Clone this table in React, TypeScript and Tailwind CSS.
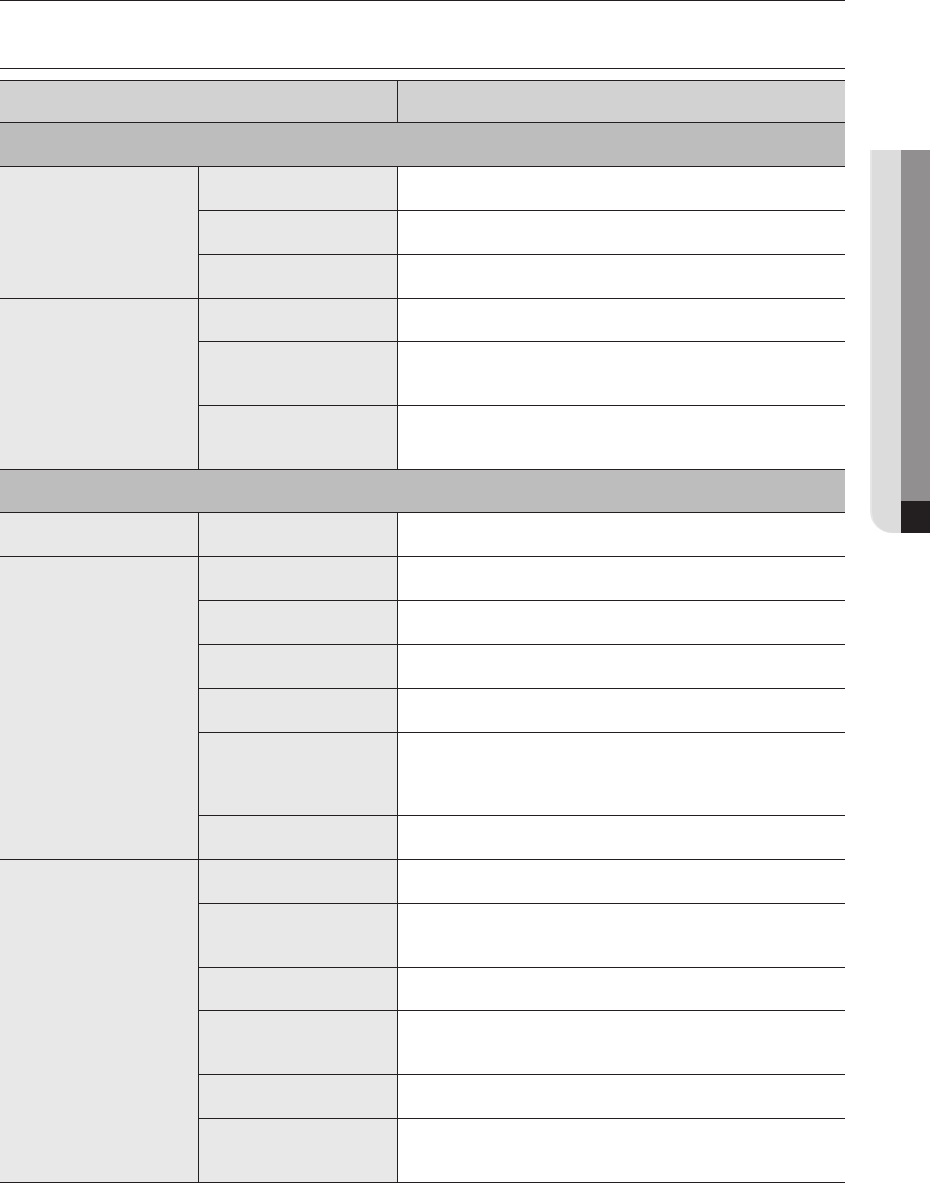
import React from "react";

type Group = { rows: number[] };

const LINE = "border-[#231f20]";

function GroupBlock({ rows }: Group) {
  return (
    <div className="flex">
      <div className={`w-[199px] shrink-0 border-t border-r ${LINE} bg-[#e8e8e8]`} />
      <div className="flex flex-1 flex-col">
        {rows.map((h, i) => (
          <div key={i} className={`flex border-t ${LINE}`} style={{ height: h }}>
            <div className={`w-[199px] shrink-0 border-r ${LINE} bg-[#e8e8e8]`} />
            <div className="flex-1 bg-white" />
          </div>
        ))}
      </div>
    </div>
  );
}

function Section() {
  return <div className={`h-[44px] border-t ${LINE} bg-[#bdbdbd]`} />;
}

export default function App() {
  return (
    <div className="flex h-[1183px] w-[930px] overflow-hidden bg-white font-['Liberation_Sans',sans-serif]">
      <div className="flex w-[845px] shrink-0 flex-col">
        <div className={`h-[68px] border-t ${LINE}`} />
        <div className={`h-[12px] border-t ${LINE}`} />
        <div className={`flex h-[42px] border-t ${LINE} bg-[#d2d2d2]`}>
          <div className={`w-[398px] shrink-0 border-r ${LINE}`} />
          <div className="flex-1" />
        </div>
        <Section />
        <GroupBlock rows={[44, 44, 44]} />
        <GroupBlock rows={[43, 64, 64]} />
        <div className={`h-[43px] border-t ${LINE} bg-[#bdbdbd]`} />
        <GroupBlock rows={[44]} />
        <GroupBlock rows={[44, 44, 44, 44, 83, 44]} />
        <div className={`border-b ${LINE}`}>
          <GroupBlock rows={[44, 64, 43, 64, 44, 64]} />
        </div>
      </div>
      <div className="ml-[25px] mt-[150px] flex h-[383px] w-[60px] shrink-0">
        <div className="w-[31px] rounded-bl-[22px] border-l-2 border-[#e6e6e6] bg-[#dcdcdc]" />
        <div className="flex w-[29px] flex-col">
          <div className="h-[351px] bg-[#918f8f]" />
          <div className="h-[32px] bg-[#231f20]" />
        </div>
      </div>
    </div>
  );
}
